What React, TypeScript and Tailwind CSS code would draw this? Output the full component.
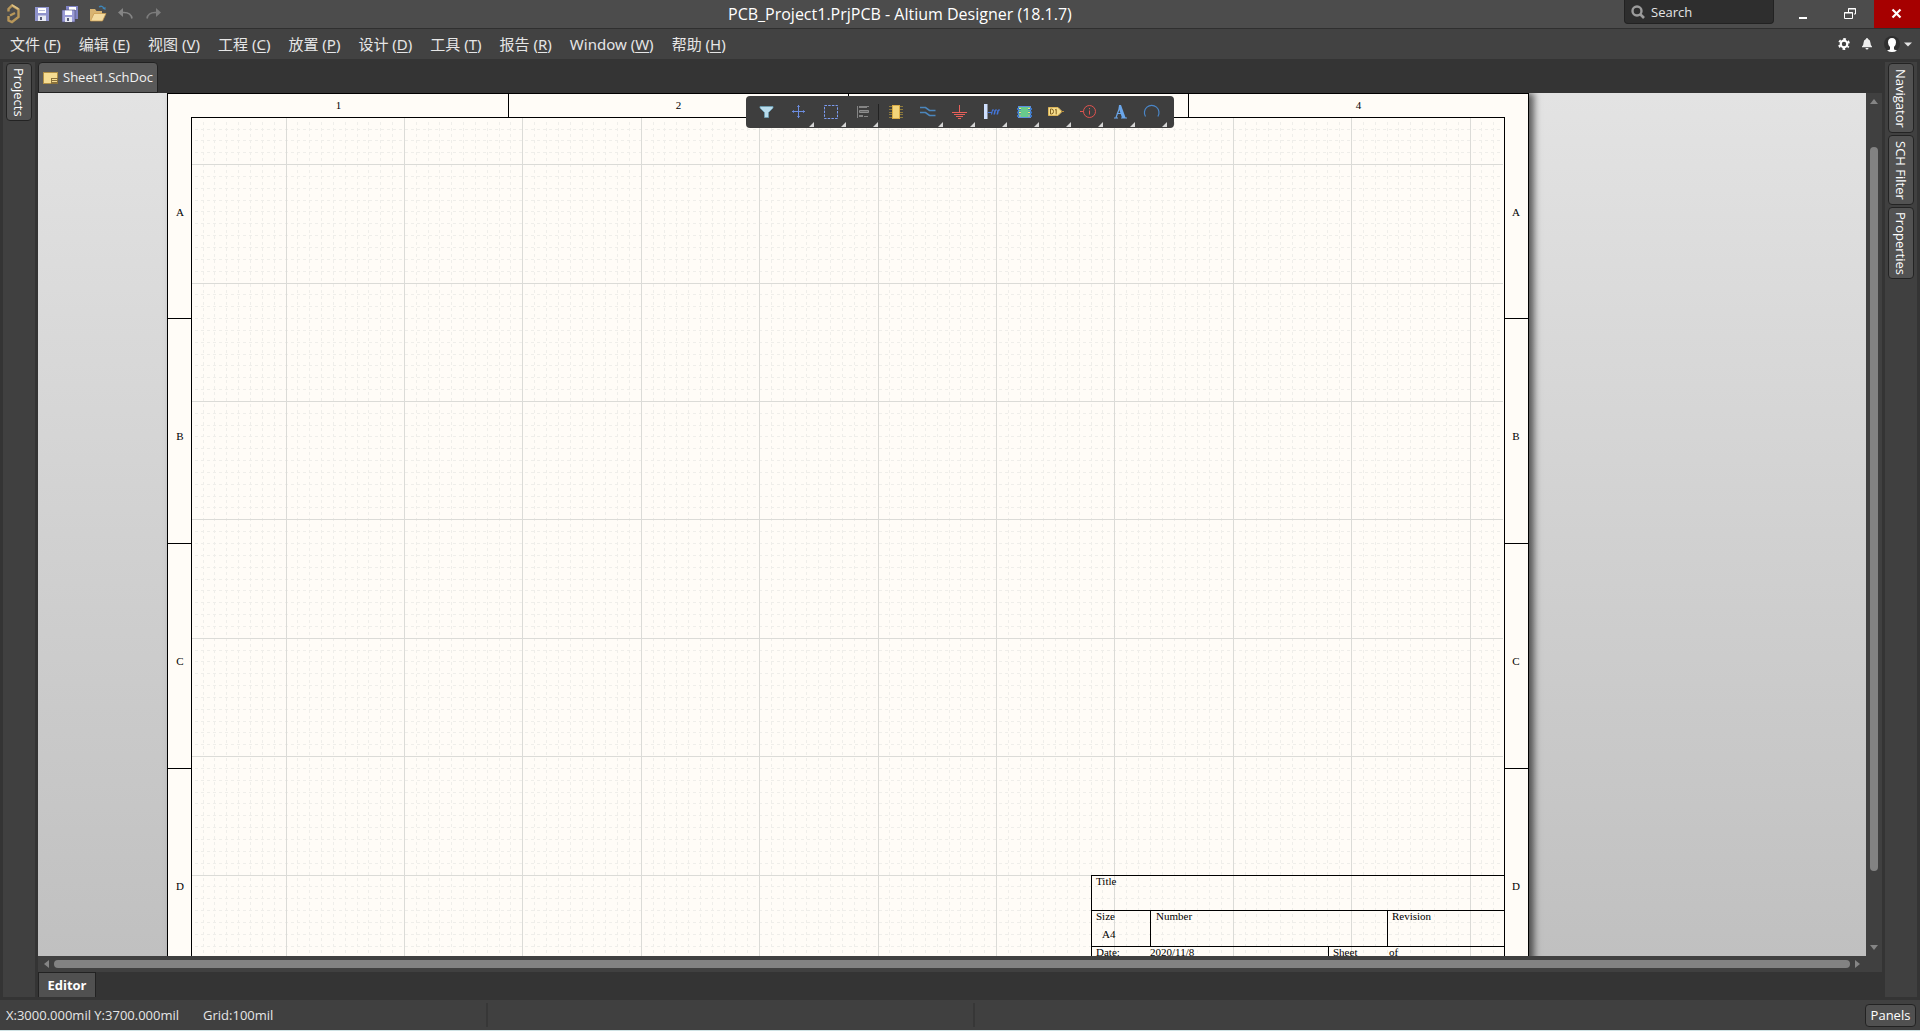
import React from "react";

const MENUS = [
  { label: "文件", key: "F" },
  { label: "编辑", key: "E" },
  { label: "视图", key: "V" },
  { label: "工程", key: "C" },
  { label: "放置", key: "P" },
  { label: "设计", key: "D" },
  { label: "工具", key: "T" },
  { label: "报告", key: "R" },
  { label: "Window", key: "W" },
  { label: "帮助", key: "H" },
];

const GRID = 118.4;
const MINOR = GRID / 10;

function range(start: number, end: number, step: number) {
  const out: number[] = [];
  for (let i = 0; start + i * step <= end; i++) out.push(Math.floor(start + i * step + 0.001));
  return out;
}

function SheetGrid() {
  const w = 1312;
  const h = 852;
  const majorX = range(94, w, GRID);
  const majorY = range(46.6, h, GRID);
  const minorX = range(94 - MINOR * 7, w, MINOR).filter((x) => !majorX.includes(x));
  const minorY = range(46.6 - MINOR * 3, h, MINOR).filter((y) => !majorY.includes(y));
  return (
    <svg aria-hidden="true" className="absolute left-0 top-0" width={w} height={h} shapeRendering="crispEdges">
      <g stroke="#efeeea" strokeDasharray="3 3">
        {minorX.map((x) => (
          <line key={x} x1={x + 0.5} x2={x + 0.5} y1="4" y2={h} />
        ))}
        {minorY.map((y) => (
          <line key={y} y1={y + 0.5} y2={y + 0.5} x1="3" x2={w - 1} />
        ))}
      </g>
      <g stroke="#dbdbd7">
        {majorX.map((x) => (
          <line key={x} x1={x + 0.5} x2={x + 0.5} y1="0" y2={h} />
        ))}
        {majorY.map((y) => (
          <line key={y} y1={y + 0.5} y2={y + 0.5} x1="0" x2={w - 1} />
        ))}
      </g>
    </svg>
  );
}

function Icon({ children }: { children: React.ReactNode }) {
  return (
    <svg aria-hidden="true" width="32" height="32" viewBox="0 0 32 32" fill="none">
      {children}
    </svg>
  );
}

const TOOLS: { name: string; menu: boolean; icon: React.ReactNode }[] = [
  {
    name: "Filter",
    menu: false,
    icon: (
      <path d="M10 10.5h13v1.500l-4.500 4.500v5h-4v-5l-4.500-4.500z" fill="#b9dcec" stroke="#6c9fb5" strokeWidth="0.8" />
    ),
  },
  {
    name: "Move",
    menu: true,
    icon: (
      <g stroke="#6c8de0">
        <path d="M10 15.500h13M16.500 9v13" />
        <path d="M11.500 14v3M21.500 14v3M15 10.500h3M15 20.500h3" strokeOpacity="0.7" />
      </g>
    ),
  },
  {
    name: "Select",
    menu: true,
    icon: <rect x="10.500" y="9.500" width="13" height="13" stroke="#7c9cf0" strokeDasharray="2.500 1.200" />,
  },
  {
    name: "Align",
    menu: true,
    icon: (
      <g>
        <path d="M11 10h1v12h-1zM13 10h8v2h-8zM13 19h4v2h-4z" fill="#848484" />
        <path d="M13.500 14.500h9v2h-9z" fill="#6a6a6a" stroke="#8e8e8e" />
        <path d="M21 10.500h2M18 20.500h4" stroke="#848484" />
      </g>
    ),
  },
  {
    name: "Part",
    menu: false,
    icon: (
      <g>
        <path d="M10 10.500h14M10 13.500h14M10 16.500h14M10 18.500h14M10 21.500h14" stroke="#8d7a3c" />
        <rect x="13.500" y="9.500" width="7" height="13" fill="#f3d57a" stroke="#d9ab45" />
      </g>
    ),
  },
  {
    name: "Wire",
    menu: true,
    icon: (
      <g stroke="#4b86bd" strokeWidth="1.600">
        <path d="M9 11.500h5.500l4 3h6" />
        <path d="M9 16.500h5.500l4 3h6" />
      </g>
    ),
  },
  {
    name: "Power port",
    menu: true,
    icon: (
      <path d="M16.500 9v7.500M9 16.500h15M11 18.500h11M13 20.500h7M15 22.500h3" stroke="#e8605a" />
    ),
  },
  {
    name: "Harness",
    menu: true,
    icon: (
      <g>
        <rect x="9" y="8" width="3.500" height="15" fill="#cfe0ff" />
        <path d="M13 16.500h3.500M16.500 18.500l1-4.500h1.500M19.500 18.500l1-4.500h1.500M22.500 18.500l1-4.500H25M20 14l-1 4.500M23 14l-1 4.500" stroke="#4477dd" strokeWidth="1.100" />
      </g>
    ),
  },
  {
    name: "Sheet symbol",
    menu: true,
    icon: (
      <g>
        <rect x="11.500" y="10.500" width="12" height="11" fill="#68c98c" stroke="#5b8fe0" />
        <path d="M10 12h4v2h-4zM10 15.500h4v2h-4zM10 19h4v2h-4zM21 12h4v2h-4zM21 15.500h4v2h-4zM21 19h4v2h-4z" fill="#3c78c8" />
        <path d="M12 12.500h2M12 16.500h2M12 20h2M21 12.500h2M21 16.500h2M21 20h2" stroke="#f4e878" />
      </g>
    ),
  },
  {
    name: "Port",
    menu: true,
    icon: (
      <g>
        <path d="M9.500 11.500h9.500l4 4-4 4H9.500z" fill="#f6dd8c" stroke="#dcb458" />
        <path d="M22 15.500h3" stroke="#b48c3c" />
        <path d="M11.500 13v5h1q2 0 2-2.500T12.500 13zM16 14.200l1.200-1V18.400" stroke="#806020" />
      </g>
    ),
  },
  {
    name: "Directive",
    menu: true,
    icon: (
      <g stroke="#e0534f">
        <circle cx="18.500" cy="15.500" r="6" />
        <path d="M9 15.500h3.500M18.500 14.500v4M18.500 12v1.200" />
      </g>
    ),
  },
  {
    name: "Text",
    menu: true,
    icon: (
      <g>
        <path d="M11 22h4M18 22h6M13 21.500l4-11M13.700 17.500h5" stroke="#6aa6ea" strokeWidth="1.200" />
        <path d="M16 9h2l4.700 13h-3.600L15.600 12z" fill="#6aa6ea" />
      </g>
    ),
  },
  {
    name: "Arc",
    menu: true,
    icon: <path d="M10.500 20.500A7.300 7.300 0 1 1 22.900 20.500" stroke="#4a86c8" strokeWidth="1.200" />,
  },
];

function DrawingToolbar() {
  return (
    <div
      role="toolbar"
      aria-label="Drawing"
      className="absolute left-1/2 top-[3px] flex -translate-x-1/2 rounded bg-[#3e3e3e] pl-1 pr-[7px]"
    >
      {TOOLS.map((t) => (
        <React.Fragment key={t.name}>
          {t.name === "Part" && <span className="my-2 w-px bg-[#222]" />}
          <button aria-label={t.name} className="relative size-8">
            <Icon>
              {t.icon}
              {t.menu && <path d="M32 26v5h-5z" fill="#d4d4d4" />}
            </Icon>
          </button>
        </React.Fragment>
      ))}
    </div>
  );
}

function TitleBlock() {
  return (
    <div className="absolute right-0 top-[757px] w-[413px] border-l border-black text-[11px] leading-[10px]">
      <div className="h-[35px] border-t border-black pl-1">Title</div>
      <div className="flex h-9 border-t border-black">
        <div className="w-[58px] pl-1">
          Size
          <div className="pl-1.5 pt-2">A4</div>
        </div>
        <div className="w-[237px] border-l border-black pl-[5px]">Number</div>
        <div className="flex-1 border-l border-black pl-1">Revision</div>
      </div>
      <div className="flex h-6 border-t border-black">
        <div className="w-[58px] pl-1">Date:</div>
        <div className="w-[178px]">2020/11/8</div>
        <div className="flex flex-1 border-l border-black pl-1">
          <span className="w-14">Sheet</span>
          <span>of</span>
        </div>
      </div>
    </div>
  );
}

function RowRuler({ side }: { side: string }) {
  return (
    <div className={`${side} row-span-3 row-start-1 flex flex-col`}>
      {["A", "B", "C", "D"].map((r) => (
        <div
          key={r}
          className="flex h-[225px] items-center justify-center border-t border-black pt-2.5 first:h-[224px] first:border-transparent"
        >
          {r}
        </div>
      ))}
    </div>
  );
}

function Sheet() {
  return (
    <div className="ml-[129px] grid w-[1362px] grid-cols-[24px_1fr_24px] grid-rows-[24px_852px_24px] border border-black bg-[#fffcf7] font-['Liberation_Serif',serif] text-[11px] leading-3 text-black shadow-[5px_0_7px_0_rgba(0,0,0,0.6)]">
      <div className="col-span-3 col-start-1 row-start-1 flex">
        {["1", "2", "3", "4"].map((c) => (
          <div
            key={c}
            className="flex flex-1 items-center justify-center border-l border-black pb-0.5 first:border-transparent"
          >
            {c}
          </div>
        ))}
      </div>
      <RowRuler side="col-start-1" />
      <RowRuler side="col-start-3" />
      <div className="relative col-start-2 row-start-2 -ml-px -mr-px -mt-px border border-black bg-[#fffcf7]">
        <SheetGrid />
        <TitleBlock />
      </div>
    </div>
  );
}

function SideTab({ label, size }: { label: string; size: string }) {
  return (
    <button
      className={`${size} flex w-[26px] items-center justify-center rounded border border-[#232323] bg-[#525252] text-[13px] leading-4 text-white [writing-mode:vertical-rl]`}
    >
      {label}
    </button>
  );
}

export default function App() {
  return (
    <div className="flex h-screen flex-col overflow-hidden border-b border-[#cfe2e4] bg-[#343434] font-['Open_Sans','Noto_Sans_CJK_SC',sans-serif] text-[#e6e6e6]">
      <header className="relative flex h-[29px] shrink-0 items-start justify-between border-b border-[#2f2f2f] bg-[#4c4c4c]">
        <div className="flex h-7 items-center gap-2 pl-1">
          <svg aria-label="Altium" width="20" height="22" viewBox="0 0 20 22" fill="none">
            <path d="M4.500 8.500V6L8 2.500 14.500 6.500v7.500L8 19l-3.500-1.500V13" stroke="#b8975a" strokeWidth="2.400" />
            <path d="M6 12.500l5-2.500" stroke="#b8975a" strokeWidth="2.200" />
            <path d="M8 2l6.500 4" stroke="#dcc084" strokeWidth="1.500" />
          </svg>
          <button aria-label="Save" className="size-5">
            <svg width="20" height="20" viewBox="0 0 20 20">
              <path d="M3 3h14v14H3z" fill="#8f93cc" />
              <path d="M6 4h8v5H6z" fill="#fff" />
              <path d="M6 11.500h8V17H6z" fill="#e8eaf4" />
              <path d="M8 13h2v3H8z" fill="#555a78" />
              <path d="M7 6h6v1H7z" fill="#b9bdd8" />
            </svg>
          </button>
          <button aria-label="Save all" className="size-5">
            <svg width="20" height="20" viewBox="0 0 20 20">
              <path d="M6 2h12v13H6z" fill="#8083c4" />
              <path d="M9 3h7v3H9z" fill="#fff" />
              <path d="M2 6h13v12H2z" fill="#9a9bd6" stroke="#4c4c6c" strokeWidth="0.600" />
              <path d="M5 6.500h7V11H5z" fill="#fff" />
              <path d="M5 13h7v5H5z" fill="#e8eaf4" />
              <path d="M7 14h2v3H7z" fill="#555a78" />
            </svg>
          </button>
          <button aria-label="Open" className="size-5">
            <svg width="20" height="20" viewBox="0 0 20 20" fill="none">
              <path d="M2 5h5l1.500 2H14v3H6l-3 7H2z" fill="#d8b472" />
              <path d="M6 9.500h12L14.500 17H2.500z" fill="#f3dba0" stroke="#c89a4c" strokeWidth="0.700" />
              <path d="M11 3q3-2 5 1.500" stroke="#3f86b8" strokeWidth="1.300" />
              <path d="M14.200 4.500L17.500 3v3z" fill="#3f86b8" />
            </svg>
          </button>
          <button aria-label="Undo" className="size-5">
            <svg width="20" height="20" viewBox="0 0 20 20" fill="none">
              <path d="M5 8.500h3q7 0 8 6" stroke="#858585" strokeWidth="1.600" />
              <path d="M2 8.500l5-4.500v9z" fill="#858585" />
            </svg>
          </button>
          <button aria-label="Redo" className="size-5">
            <svg width="20" height="20" viewBox="0 0 20 20" fill="none">
              <path d="M14 8.500h-3q-7 0-8 6" stroke="#7c7c7c" strokeWidth="1.600" />
              <path d="M17 8.500l-5-4.500v9z" fill="#7c7c7c" />
            </svg>
          </button>
        </div>
        <h1 className="absolute left-1/2 top-0 -translate-x-[232px] whitespace-nowrap text-base leading-7 text-white">
          PCB_Project1.PrjPCB - Altium Designer (18.1.7)
        </h1>
        <div className="flex h-7 items-start">
          <label className="mr-1.5 flex h-6 w-[150px] items-center gap-1.5 rounded-b border border-t-0 border-[#222] bg-[#2e2e2e] pl-1.5">
            <svg aria-hidden="true" width="14" height="14" viewBox="0 0 14 14" fill="none" stroke="#9c9c9c">
              <circle cx="6" cy="6" r="4.500" strokeWidth="2.400" />
              <path d="M9.500 9.500L13 13" strokeWidth="2.600" />
            </svg>
            <input
              type="text"
              aria-label="Search"
              placeholder="Search"
              className="w-24 bg-transparent text-[13px] leading-5 outline-none placeholder:text-[#e4e4e4]"
            />
          </label>
          <button aria-label="Minimize" className="h-7 w-[46px]">
            <svg width="46" height="28" viewBox="0 0 46 28">
              <path d="M19 17h8v2h-8z" fill="#fff" />
            </svg>
          </button>
          <button aria-label="Restore" className="h-7 w-[48px]">
            <svg width="48" height="28" viewBox="0 0 48 28" fill="none" stroke="#fff">
              <path d="M22.500 12V8.500h7V14H28M22 9h8" />
              <path d="M18.500 12.500h8v6h-8zM18 13h9" />
            </svg>
          </button>
          <button aria-label="Close" className="h-7 w-[46px] bg-[#a60000]">
            <svg width="46" height="28" viewBox="0 0 46 28" stroke="#fff" strokeWidth="2.200">
              <path d="M18.500 9.500l8 8M26.500 9.500l-8 8" />
            </svg>
          </button>
        </div>
      </header>

      <nav className="flex h-[30px] shrink-0 items-center justify-between bg-[#424242] pl-2.5 pr-2">
        <div className="flex gap-[18px] font-['Noto_Sans','Noto_Sans_CJK_SC',sans-serif] text-[15px] leading-5">
          {MENUS.map((m) => (
            <button key={m.key} className="whitespace-nowrap">
              {m.label} (<span className="underline underline-offset-2">{m.key}</span>)
            </button>
          ))}
        </div>
        <div className="flex items-center gap-3">
          <button aria-label="Settings">
            <svg width="12" height="12" viewBox="0 0 12 12" fill="none" stroke="#fff">
              <circle cx="6" cy="6" r="3.300" strokeWidth="2.200" />
              <circle cx="6" cy="6" r="5" strokeWidth="1.800" strokeDasharray="2.600 2.640" strokeDashoffset="1.300" transform="rotate(30 6 6)" />
            </svg>
          </button>
          <button aria-label="Notifications">
            <svg width="10" height="12" viewBox="0 0 10 12" fill="#eee">
              <path d="M5 0q1 0 1 1 2.500.8 2.500 4 0 2.500 1.500 3.500v.7H0v-.7Q1.500 7.500 1.500 5 1.500 1.800 4 1q0-1 1-1zM3.500 10h3q0 1.500-1.500 1.500T3.500 10z" />
            </svg>
          </button>
          <button aria-label="Account" className="flex items-center gap-1">
            <svg width="16" height="16" viewBox="0 0 16 16">
              <circle cx="8" cy="8" r="8" fill="#2f2f2f" />
              <path d="M8 2q4 0 4 4.500 0 2.500-2 4.500v2.500l3 1q-2 1.500-5 1.500t-5-1.500l3-1V11Q4 9 4 6.500 4 2 8 2z" fill="#fff" />
            </svg>
            <svg width="8" height="5" viewBox="0 0 8 5">
              <path d="M0 .5h8l-4 4z" fill="#e4e4e4" />
            </svg>
          </button>
        </div>
      </nav>

      <div className="flex min-h-0 flex-1 px-[3px]">
        <aside className="mb-[3px] mt-[3px] w-8 shrink-0 bg-[#404040] px-[3px] pt-px">
          <SideTab label="Projects" size="h-[58px]" />
        </aside>

        <main className="mx-[3px] flex min-w-0 flex-1 flex-col">
          <div className="flex h-[34px] shrink-0 items-start pt-[3px]">
            <button className="flex h-[31px] w-[120px] items-center gap-[5px] rounded-t border border-[#222] bg-[#595959] pl-1 text-[13px] text-[#f2f2f2]">
              <svg aria-hidden="true" className="shrink-0" width="15" height="12" viewBox="0 0 15 12">
                <path d="M0 0h15v12H0z" fill="#b08f45" />
                <path d="M1 1h13v10H1z" fill="#f5dc92" />
                <path d="M8 6h7v6H8z" fill="#8a713a" />
                <path d="M9 7h5v1H9zM9 9h5v1H9z" fill="#f5dc92" />
              </svg>
              Sheet1.SchDoc
            </button>
          </div>

          <div className="relative flex min-h-0 flex-1 bg-[#404040]">
            <div className="min-w-0 flex-1 overflow-hidden bg-linear-to-b from-[#e3e3e3] to-[#c0c0c0]">
              <Sheet />
            </div>
            <div className="flex w-4 shrink-0 flex-col items-center pb-1.5 pt-1.5">
              <svg width="8" height="5" viewBox="0 0 8 5">
                <path d="M0 5h8L4 0z" fill="#858585" />
              </svg>
              <div className="mb-[74px] mt-[43px] w-2 flex-1 rounded bg-[#828282]" />
              <svg width="8" height="5" viewBox="0 0 8 5">
                <path d="M0 0h8L4 5z" fill="#858585" />
              </svg>
            </div>
            <DrawingToolbar />
          </div>
          <div className="flex h-4 shrink-0 items-center bg-[#404040] pl-1.5 pr-[22px]">
            <svg width="5" height="8" viewBox="0 0 5 8">
              <path d="M5 0v8L0 4z" fill="#858585" />
            </svg>
            <div className="mx-[5px] h-2 flex-1 rounded bg-[#828282]" />
            <svg width="5" height="8" viewBox="0 0 5 8">
              <path d="M0 0v8l5-4z" fill="#858585" />
            </svg>
          </div>
          <div className="flex h-7 shrink-0">
            <button className="mb-[3px] w-[58px] border border-b-0 border-[#222] bg-[#505050] pt-0.5 text-[13px] font-bold text-white">
              Editor
            </button>
          </div>
        </main>

        <aside className="mb-[3px] mt-[3px] flex w-8 shrink-0 flex-col gap-0.5 bg-[#404040] px-[3px] pt-px">
          <SideTab label="Navigator" size="h-[70px]" />
          <SideTab label="SCH Filter" size="h-[70px]" />
          <SideTab label="Properties" size="h-[72px]" />
        </aside>
      </div>

      <footer className="flex h-[30px] shrink-0 items-center bg-[#404040] pl-1.5 pr-1 text-[13px] leading-5">
        <div className="flex w-[480px] gap-6">
          <span>X:3000.000mil Y:3700.000mil</span>
          <span>Grid:100mil</span>
        </div>
        <span className="h-6 w-0.5 bg-[#373737]" />
        <span className="ml-[485px] h-6 w-0.5 bg-[#373737]" />
        <button className="ml-auto h-[23px] w-[51px] rounded border border-[#222] bg-[#505050] text-white">
          Panels
        </button>
      </footer>
    </div>
  );
}
